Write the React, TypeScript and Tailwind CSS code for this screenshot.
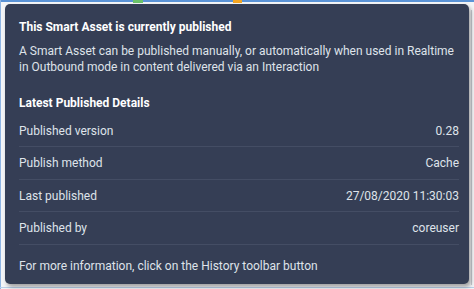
const rows = [
  { label: "Published version", value: "0.28", h: "h-[32px]" },
  { label: "Publish method", value: "Cache", h: "h-[33px]" },
  { label: "Last published", value: "27/08/2020 11:30:03", h: "h-[32px]" },
  { label: "Published by", value: "coreuser", h: "h-[33px]" },
];

export default function App() {
  return (
    <div className="relative w-[474px] h-[289px] overflow-hidden bg-[#f4f5f7] pl-[5px] pt-[4px] font-['Roboto',sans-serif]">
      {/* bits of the page behind the popover */}
      <div className="absolute inset-x-0 top-0 h-[2px] bg-[#5b93d6]" />
      <div className="absolute left-[133px] top-0 h-[3px] w-[10px] bg-[#6cc36a]" />
      <div className="absolute left-[233px] top-0 h-[3px] w-[9px] bg-[#f5a623]" />
      <div className="absolute left-0 inset-y-0 w-[1px] bg-[#8fb5e3]" />
      <div className="absolute inset-x-0 bottom-[1px] h-[1px] bg-[#b9cfe9]" />
      <div className="absolute right-[2px] top-[10px] bottom-[4px] w-[1px] bg-[#c9ccd2]" />

      {/* popover */}
      <div className="relative flex flex-col w-[464px] h-[280px] rounded-[5px] bg-[#353e55] shadow-[2px_3px_4px_rgba(0,0,0,0.35)] pl-[14px] pr-[10px] pt-[15px] text-[12px] leading-[16px] text-[#dfe3ea]">
        <div className="font-bold text-white">This Smart Asset is currently published</div>
        <p className="mt-[8px]">
          A Smart Asset can be published manually, or automatically when used in Realtime
          <br />
          in Outbound mode in content delivered via an Interaction
        </p>
        <div className="mt-[20px] font-bold text-white">Latest Published Details</div>
        <div className="mt-[4px] flex flex-col">
          {rows.map((r) => (
            <div
              key={r.label}
              className={`flex items-center justify-between border-b border-[#444d64] ${r.h}`}
            >
              <span>{r.label}</span>
              <span>{r.value}</span>
            </div>
          ))}
        </div>
        <div className="mt-[13px]">For more information, click on the History toolbar button</div>
      </div>
    </div>
  );
}
